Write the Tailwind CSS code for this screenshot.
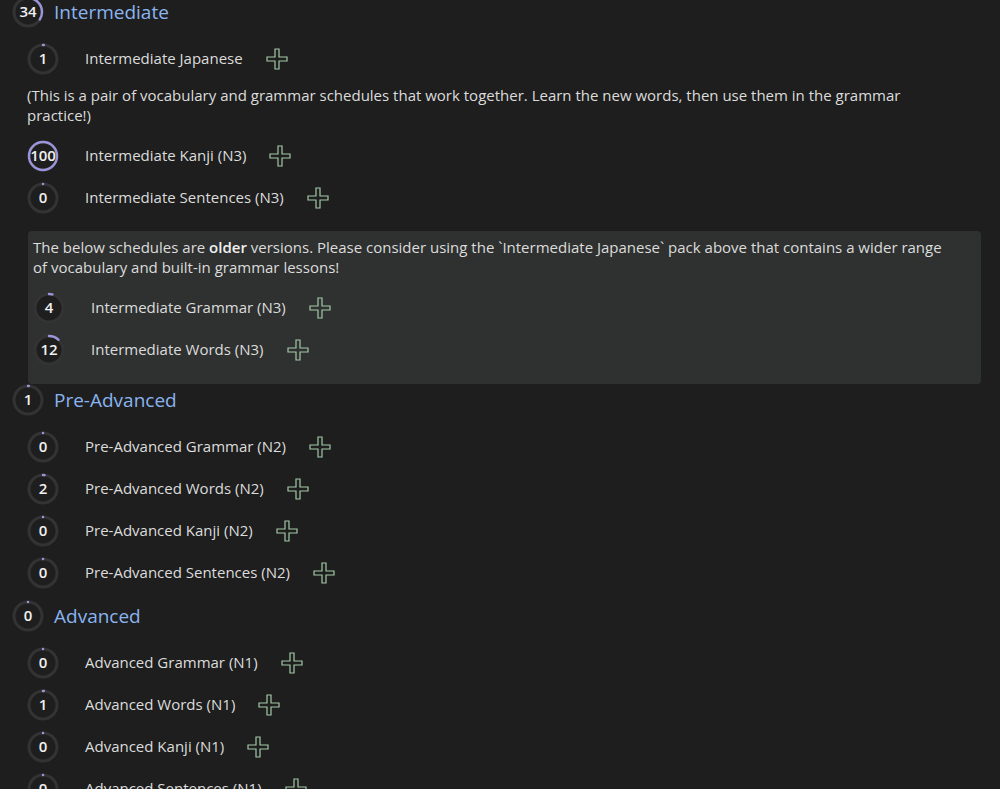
<!DOCTYPE html>
<html lang="en">
<head>
    <meta charset="UTF-8">
    <meta name="viewport" content="width=device-width, initial-scale=1.0">
    <title>Schedules</title>
    <script src="https://cdn.jsdelivr.net/npm/@tailwindcss/browser@4"></script>
</head>
<body class="bg-[#1e1e1e] text-[#dcdcdc] text-[15px] leading-5 font-['Open_Sans',sans-serif] h-screen overflow-hidden">
    <!-- plus icon shared by all the add buttons -->
    <svg class="hidden">
        <symbol id="plus" viewBox="0 0 22 22">
            <path d="M9 1h4v8h8v4h-8v8h-4v-8h-8v-4h8z" fill="none" stroke="#a3c9a8" stroke-width="1.2"/>
        </symbol>
    </svg>

    <main id="schedules" class="-mt-1 pl-3 pr-[19px]"></main>

    <script>
    const levels = [
        {
            name: 'Intermediate', percent: 34,
            packs: [
                { name: 'Intermediate Japanese', percent: 1, note: '(This is a pair of vocabulary and grammar schedules that work together. Learn the new words, then use them in the grammar practice!)' },
                { name: 'Intermediate Kanji (N3)', percent: 100 },
                { name: 'Intermediate Sentences (N3)', percent: 0 }
            ],
            older: [
                { name: 'Intermediate Grammar (N3)', percent: 4 },
                { name: 'Intermediate Words (N3)', percent: 12 }
            ]
        },
        {
            name: 'Pre-Advanced', percent: 1,
            packs: [
                { name: 'Pre-Advanced Grammar (N2)', percent: 0 },
                { name: 'Pre-Advanced Words (N2)', percent: 2 },
                { name: 'Pre-Advanced Kanji (N2)', percent: 0 },
                { name: 'Pre-Advanced Sentences (N2)', percent: 0 }
            ]
        },
        {
            name: 'Advanced', percent: 0,
            packs: [
                { name: 'Advanced Grammar (N1)', percent: 0 },
                { name: 'Advanced Words (N1)', percent: 1 },
                { name: 'Advanced Kanji (N1)', percent: 0 },
                { name: 'Advanced Sentences (N1)', percent: 0 }
            ]
        }
    ];

    // Progress ring, the round cap leaves a dot at 0
    function ring(percent) {
        return `
            <span class="grid size-8 shrink-0 place-items-center">
                <svg class="col-start-1 row-start-1 size-8 -rotate-90" viewBox="0 0 32 32">
                    <circle cx="16" cy="16" r="14" fill="#1e1e1e" stroke="#333333" stroke-width="3"/>
                    <circle cx="16" cy="16" r="14" fill="none" stroke="#9a94d8" stroke-width="2.4" stroke-linecap="round" pathLength="100" stroke-dasharray="${Math.max(percent, 0.1)} 200"/>
                </svg>
                <span class="z-10 col-start-1 row-start-1 pb-0.5 text-[15px] leading-5 font-semibold text-[#f0f0f0]">${percent}</span>
            </span>`;
    }

    function row(pack) {
        return `
            <li>
                <div class="flex h-[42px] items-center">
                    ${ring(pack.percent)}
                    <span class="ml-[26px] pb-0.5">${pack.name}</span>
                    <button type="button" class="ml-[23px] cursor-pointer" aria-label="Add ${pack.name}"><svg class="size-[22px]"><use href="#plus"/></svg></button>
                </div>
                ${pack.note ? `<p class="mt-[5px] mb-2.5 pr-8">${pack.note}</p>` : ''}
            </li>`;
    }

    function older(packs) {
        return `
            <div class="mt-3 ml-4 rounded-sm bg-[#2f3130] px-[5px] pt-1.5 pb-[13px]">
                <p class="pr-8">The below schedules are <b class="font-semibold text-[#f0f0f0]">older</b> versions. Please consider using the \`Intermediate Japanese\` pack above that contains a wider range of vocabulary and built-in grammar lessons!</p>
                <ul class="mt-2.5">${packs.map(row).join('')}</ul>
            </div>`;
    }

    document.getElementById('schedules').innerHTML = levels.map(level => `
        <section class="${level.older ? '' : 'pb-1.5'}">
            <h2 class="flex h-8 items-center gap-2.5 text-[19px] text-[#8ab4f0]">${ring(level.percent)}${level.name}</h2>
            <ul class="mt-2.5 ml-[15px]">${level.packs.map(row).join('')}</ul>
            ${level.older ? older(level.older) : ''}
        </section>`).join('');
    </script>
</body>
</html>
